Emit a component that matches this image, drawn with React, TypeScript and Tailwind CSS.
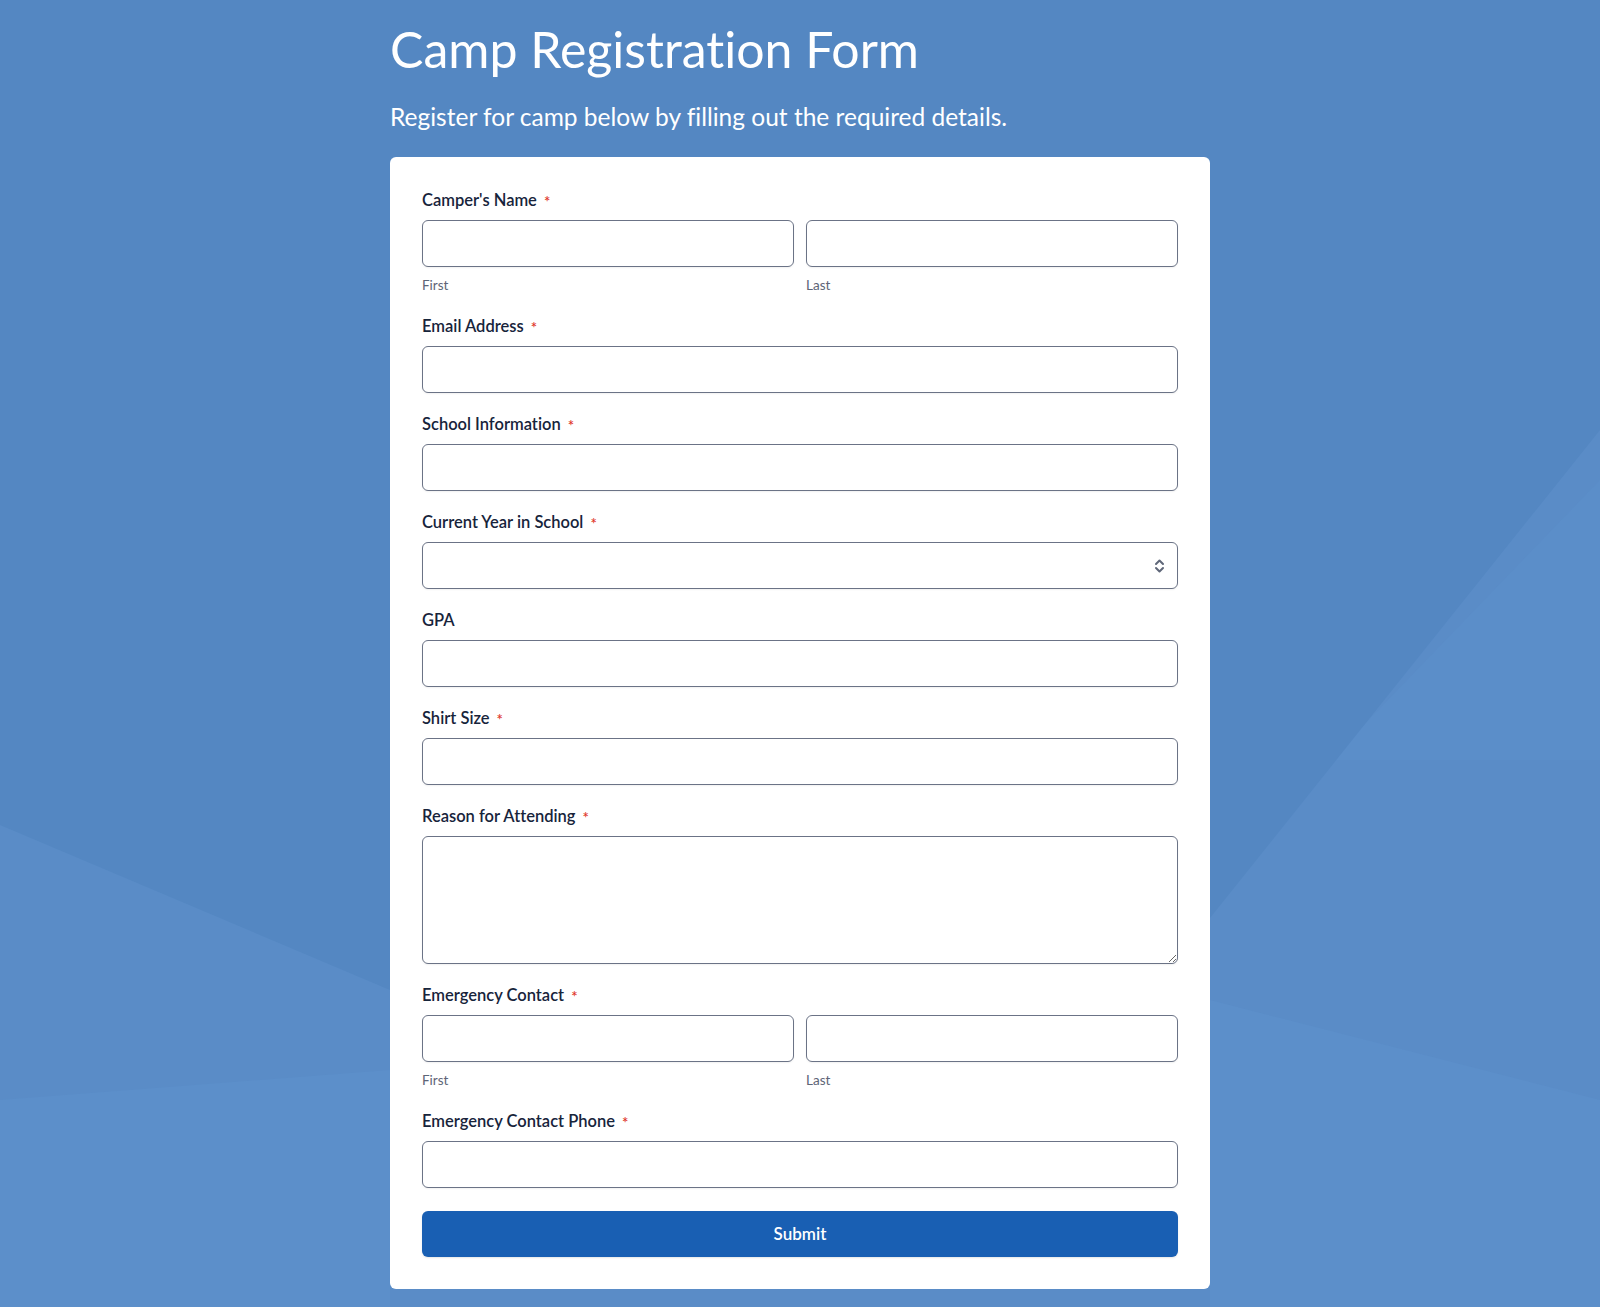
import React from "react";

const Req = () => <span className="ml-[7px] text-[15px] text-[#e0372b] leading-none relative top-[1px]">*</span>;

function Label({ children, req = true }: { children: React.ReactNode; req?: boolean }) {
  return (
    <div className="h-5 mb-[10px] flex items-center text-[16.5px] font-semibold text-[#17243b] leading-5">
      <span>{children}</span>
      {req && <Req />}
    </div>
  );
}

const inputCls =
  "block w-full h-[47px] rounded-[6px] border border-[#6b7386] bg-white shadow-[0_1px_2px_rgba(0,0,0,0.06)] outline-none px-3";

function TextField({ label, req = true }: { label: string; req?: boolean }) {
  return (
    <div>
      <Label req={req}>{label}</Label>
      <input className={inputCls} />
    </div>
  );
}

function NameField({ label }: { label: string }) {
  return (
    <div>
      <Label>{label}</Label>
      <div className="grid grid-cols-2 gap-3">
        <div>
          <input className={inputCls} />
          <div className="mt-[10px] mb-[2px] text-[13.5px] leading-4 text-[#5d6577]">First</div>
        </div>
        <div>
          <input className={inputCls} />
          <div className="mt-[10px] mb-[2px] text-[13.5px] leading-4 text-[#5d6577]">Last</div>
        </div>
      </div>
    </div>
  );
}

export default function App() {
  return (
    <div
      className="relative min-h-screen w-full overflow-hidden bg-[#5a8cc7] [font-variant-ligatures:none]"
      style={{ fontFamily: "Lato, 'Noto Sans', sans-serif" }}
    >
      <svg
        className="absolute inset-0 w-full h-full"
        viewBox="0 0 1600 1307"
        preserveAspectRatio="none"
      >
        <polygon points="0,1100 390,1070 390,1307 0,1307" fill="#5c8fca" />
        <polygon points="1330,760 1600,480 1600,760" fill="#5b8ec9" />
        <polygon points="1210,1000 1600,1100 1600,1307 1210,1307" fill="#5c8fca" />
        <polygon points="0,0 1600,0 1600,430 1210,918 800,1120 390,990 0,825" fill="#5487c2" />
      </svg>
      <div className="relative mx-auto w-[820px]">
        <h1 className="pt-[18px] text-[50px] leading-[62px] text-white font-normal">
          Camp Registration Form
        </h1>
        <p className="mt-[22px] text-[24.5px] leading-[30px] text-white">
          Register for camp below by filling out the required details.
        </p>
        <div className="mt-[25px] mb-[18px] bg-white rounded-[6px] px-8 pt-[33px] pb-8">
          <div className="flex flex-col gap-[21px]">
            <NameField label="Camper's Name" />
            <TextField label="Email Address" />
            <TextField label="School Information" />
            <div>
              <Label>Current Year in School</Label>
              <div className={inputCls + " relative"}>
                <svg
                  className="absolute right-[12px] top-1/2 -translate-y-1/2"
                  width="11"
                  height="17"
                  viewBox="0 0 11 17"
                  fill="none"
                  stroke="#5f6779"
                  strokeWidth="2"
                  strokeLinecap="round"
                  strokeLinejoin="round"
                >
                  <path d="M2 6.5 L5.5 3 L9 6.5" />
                  <path d="M2 10.5 L5.5 14 L9 10.5" />
                </svg>
              </div>
            </div>
            <TextField label="GPA" req={false} />
            <TextField label="Shirt Size" />
            <div>
              <Label>Reason for Attending</Label>
              <textarea className="block w-full h-[128px] rounded-[6px] border border-[#6b7386] bg-white shadow-[0_1px_2px_rgba(0,0,0,0.06)] outline-none p-3" />
            </div>
            <NameField label="Emergency Contact" />
            <TextField label="Emergency Contact Phone" />
          </div>
          <button className="mt-[23px] w-full h-[46px] rounded-[6px] bg-[#195fb3] text-white text-[17px] font-semibold shadow-[0_1px_2px_rgba(0,0,0,0.1)]">
            Submit
          </button>
        </div>
      </div>
    </div>
  );
}
